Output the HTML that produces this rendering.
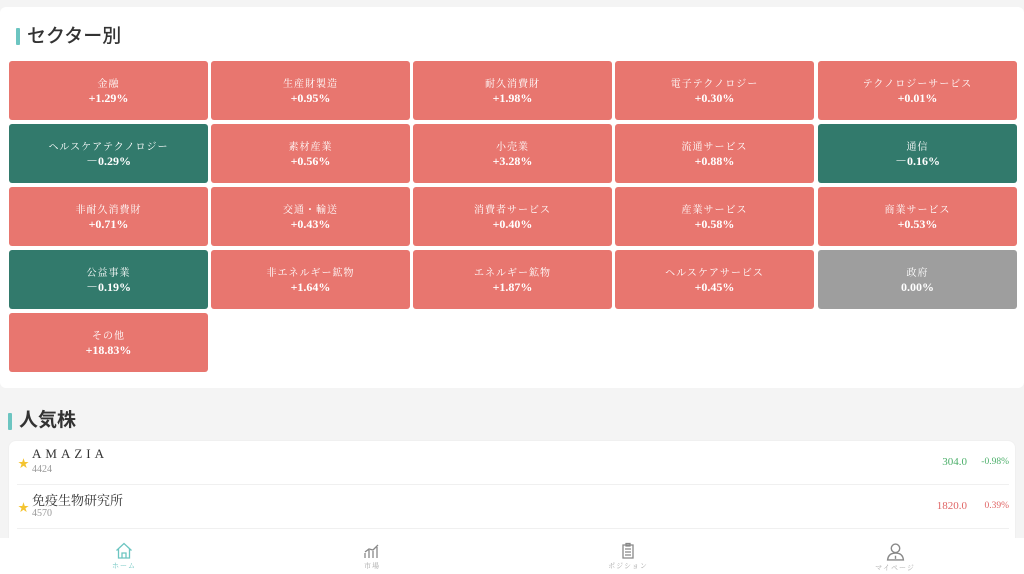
<!DOCTYPE html>
<html><head><meta charset="utf-8"><style>
*{margin:0;padding:0;box-sizing:border-box}
body{width:1024px;height:574px;overflow:hidden;background:#f4f4f4;font-family:"Liberation Serif","Noto Serif CJK SC",serif;position:relative}
.card{position:absolute;left:0;top:7px;width:1024px;height:381px;background:#fff;border-radius:6px}
.t{position:absolute;font-family:"Liberation Sans","Noto Sans CJK JP",sans-serif;font-size:19px;font-weight:500;color:#333;line-height:24px}
.bar{position:absolute;width:4px;height:17px;background:#6cc5c1;border-radius:1px}
.c{position:absolute;width:199px;height:59px;border-radius:3px;color:#fff;text-align:center;padding-top:17px}
.c .n{font-size:10px;line-height:13px;letter-spacing:1px}
.c .v{font-size:12px;line-height:14px;font-weight:bold;margin-top:0}
.r{background:#e8766f}.g{background:#327a6c}.x{background:#9e9e9e}
.list{position:absolute;left:8px;top:440px;width:1008px;height:110px;background:#fff;border-radius:8px;border:1px solid #f0f0f0}
.row{position:absolute;left:8px;width:992px;height:44px;border-bottom:1px solid #f0f0f0}
.star{position:absolute;left:1px;top:14px;color:#f4c430;font-size:11px}
.nm{position:absolute;left:15px;top:5px;font-size:13px;color:#333}
.cd{position:absolute;left:15px;top:23px;font-size:10px;color:#999}
.pr{position:absolute;right:42px;top:14px;font-size:11px;line-height:14px}
.pc{position:absolute;right:0;top:14px;font-size:9.5px;line-height:14px}
.nav{position:absolute;left:0;top:538px;width:1024px;height:36px;background:#fff}
.ni{position:absolute;top:4px;width:120px;text-align:center;font-size:7px;color:#aaa;letter-spacing:1px}
.ni svg{display:block;margin:0 auto 2px}
</style></head><body>
<div class="card"></div>
<div class="bar" style="left:16px;top:28px"></div>
<div class="t" style="left:27px;top:25px">セクター別</div>
<div class="c r" style="left:9px;top:61px"><div class="n">金融</div><div class="v">+1.29%</div></div>
<div class="c r" style="left:211px;top:61px"><div class="n">生産財製造</div><div class="v">+0.95%</div></div>
<div class="c r" style="left:413px;top:61px"><div class="n">耐久消費財</div><div class="v">+1.98%</div></div>
<div class="c r" style="left:615px;top:61px"><div class="n">電子テクノロジー</div><div class="v">+0.30%</div></div>
<div class="c r" style="left:818px;top:61px"><div class="n">テクノロジーサービス</div><div class="v">+0.01%</div></div>
<div class="c g" style="left:9px;top:124px"><div class="n">ヘルスケアテクノロジー</div><div class="v">－0.29%</div></div>
<div class="c r" style="left:211px;top:124px"><div class="n">素材産業</div><div class="v">+0.56%</div></div>
<div class="c r" style="left:413px;top:124px"><div class="n">小売業</div><div class="v">+3.28%</div></div>
<div class="c r" style="left:615px;top:124px"><div class="n">流通サービス</div><div class="v">+0.88%</div></div>
<div class="c g" style="left:818px;top:124px"><div class="n">通信</div><div class="v">－0.16%</div></div>
<div class="c r" style="left:9px;top:187px"><div class="n">非耐久消費財</div><div class="v">+0.71%</div></div>
<div class="c r" style="left:211px;top:187px"><div class="n">交通・輸送</div><div class="v">+0.43%</div></div>
<div class="c r" style="left:413px;top:187px"><div class="n">消費者サービス</div><div class="v">+0.40%</div></div>
<div class="c r" style="left:615px;top:187px"><div class="n">産業サービス</div><div class="v">+0.58%</div></div>
<div class="c r" style="left:818px;top:187px"><div class="n">商業サービス</div><div class="v">+0.53%</div></div>
<div class="c g" style="left:9px;top:250px"><div class="n">公益事業</div><div class="v">－0.19%</div></div>
<div class="c r" style="left:211px;top:250px"><div class="n">非エネルギー鉱物</div><div class="v">+1.64%</div></div>
<div class="c r" style="left:413px;top:250px"><div class="n">エネルギー鉱物</div><div class="v">+1.87%</div></div>
<div class="c r" style="left:615px;top:250px"><div class="n">ヘルスケアサービス</div><div class="v">+0.45%</div></div>
<div class="c x" style="left:818px;top:250px"><div class="n">政府</div><div class="v">0.00%</div></div>
<div class="c r" style="left:9px;top:313px"><div class="n">その他</div><div class="v">+18.83%</div></div>

<div class="bar" style="left:8px;top:413px"></div>
<div class="t" style="left:19px;top:409px;font-weight:bold">人気株</div>
<div class="list">
<div class="row" style="top:0"><span class="star">★</span><span class="nm" style="letter-spacing:4px">AMAZIA</span><span class="cd">4424</span><span class="pr" style="color:#4caf6a">304.0</span><span class="pc" style="color:#4caf6a">-0.98%</span></div>
<div class="row" style="top:44px"><span class="star">★</span><span class="nm">免疫生物研究所</span><span class="cd">4570</span><span class="pr" style="color:#e06565">1820.0</span><span class="pc" style="color:#e06565">0.39%</span></div>
</div>
<div class="nav">
<div class="ni" style="left:64px;color:#6cc5c1"><svg width="18" height="17" viewBox="0 0 18 17" fill="none" stroke="#6cc5c1" stroke-width="1.3"><path d="M1.5 8.5L9 1.5L16.5 8.5M3.5 6.5V16H14.5V6.5M7 16V11H11V16"/></svg>ホーム</div>
<div class="ni" style="left:312px"><svg width="18" height="17" viewBox="0 0 18 17" fill="none" stroke="#888" stroke-width="1.3"><path d="M2 16V11M6 16V8M10 16V9M14 16V5M2 10L6 7L10 8L15 3"/></svg>市場</div>
<div class="ni" style="left:568px"><svg width="16" height="17" viewBox="0 0 16 17" fill="none" stroke="#888" stroke-width="1.3"><path d="M3 3H13V16H3ZM6 1.5H10V4H6ZM5 7H11M5 10H11M5 13H11"/></svg>ポジション</div>
<div class="ni" style="left:835px"><svg width="19" height="19" viewBox="0 0 18 18" fill="none" stroke="#888" stroke-width="1.3"><circle cx="9" cy="6" r="4"/><path d="M1.5 17C2 12 5 10.5 9 10.5C13 10.5 16 12 16.5 17ZM9 13V16"/></svg>マイページ</div>
</div>
</body></html>
